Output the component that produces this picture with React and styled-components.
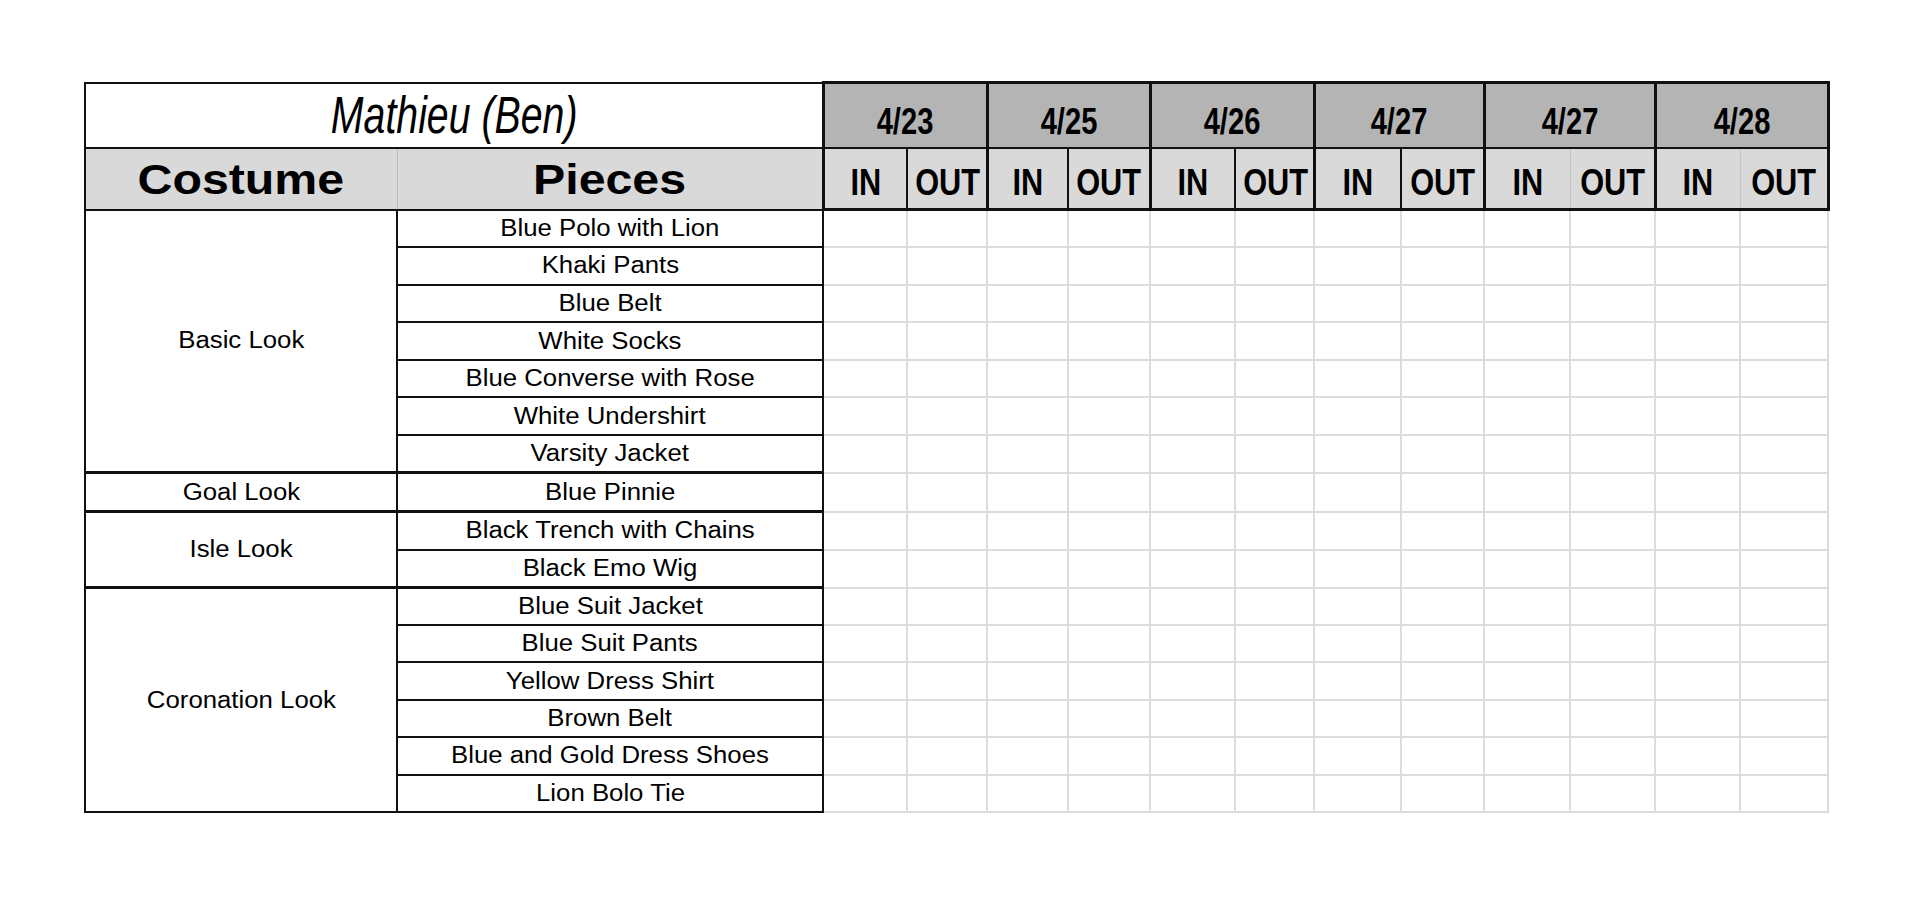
import React from "react";
import styled, { createGlobalStyle, css } from "styled-components";

const GlobalStyle = createGlobalStyle`
  html, body {
    margin: 0;
    padding: 0;
    background: #ffffff;
  }
  body {
    font-family: "Liberation Sans", Arial, sans-serif;
    color: #000;
  }
`;

const Page = styled.div`
  padding: 81px 0 0 84px;
`;

const Sheet = styled.table`
  border-collapse: collapse;
  table-layout: fixed;
  width: 1743px;
`;

const Col = styled.col`
  width: ${(p) => p.$w}px;
`;

const Row = styled.tr`
  height: ${(p) => p.$h}px;
`;

const Label = styled.span`
  display: inline-block;
  white-space: nowrap;
  transform: scaleX(${(p) => p.$sx ?? 1});
`;

const cellBase = css`
  padding: 0;
  text-align: center;
  line-height: 1;
  box-sizing: border-box;
`;

const TitleCell = styled.td`
  ${cellBase}
  border: 2px solid #111;
  border-right: 3px solid #111;
  vertical-align: bottom;
  padding-bottom: 6px;
  font-size: 51px;
  font-style: italic;
  font-weight: 400;
`;

const HeadCell = styled.td`
  ${cellBase}
  background: #d9d9d9;
  border-top: 2px solid #111;
  border-bottom: 2px solid #111;
  border-left: ${(p) => (p.$first ? "2px solid #111" : "1px solid #bdbdbd")};
  border-right: ${(p) => (p.$first ? "1px solid #bdbdbd" : "3px solid #111")};
  vertical-align: bottom;
  padding-bottom: 8px;
  font-size: 42px;
  font-weight: 700;
`;

const DateCell = styled.td`
  ${cellBase}
  background: #b4b4b4;
  border: 3px solid #111;
  border-bottom: 2px solid #111;
  vertical-align: bottom;
  padding-bottom: 7px;
  font-size: 36px;
  font-weight: 700;
`;

const SlotCell = styled.td`
  ${cellBase}
  background: #d9d9d9;
  border-top: 2px solid #111;
  border-bottom: 3px solid #111;
  ${(p) =>
    p.$side === "in"
      ? css`
          border-left: 3px solid #111;
          border-right: ${p.$dark ? "2px solid #111" : "1px solid #c4c4c4"};
        `
      : css`
          border-right: 3px solid #111;
          border-left: ${p.$dark ? "2px solid #111" : "1px solid #c4c4c4"};
        `}
  vertical-align: bottom;
  padding-bottom: 7px;
  font-size: 37.5px;
  font-weight: 700;
`;

const LookCell = styled.td`
  ${cellBase}
  border-left: 2px solid #111;
  border-right: 2px solid #111;
  border-bottom: ${(p) => (p.$last ? "2px" : "3px")} solid #111;
  vertical-align: middle;
  font-size: 23px;
`;

const PieceCell = styled.td`
  ${cellBase}
  border-right: 2px solid #111;
  border-bottom: ${(p) => (p.$sep ? "3px" : "2px")} solid #111;
  vertical-align: middle;
  font-size: 23px;
`;

const CheckCell = styled.td`
  ${cellBase}
  border: 2px solid #dcdcdc;
`;

const dates = [
  { label: "4/23", dark: true },
  { label: "4/25", dark: true },
  { label: "4/26", dark: true },
  { label: "4/27", dark: true },
  { label: "4/27", dark: false },
  { label: "4/28", dark: false },
];

const slotWidths = [84, 80, 81, 82, 85, 79, 87, 83, 86, 85, 85, 88];

const looks = [
  {
    name: "Basic Look",
    h: 37.6,
    pieces: [
      "Blue Polo with Lion",
      "Khaki Pants",
      "Blue Belt",
      "White Socks",
      "Blue Converse with Rose",
      "White Undershirt",
      "Varsity Jacket",
    ],
  },
  { name: "Goal Look", h: 39, pieces: ["Blue Pinnie"] },
  {
    name: "Isle Look",
    h: 38,
    pieces: ["Black Trench with Chains", "Black Emo Wig"],
  },
  {
    name: "Coronation Look",
    h: 37.4,
    pieces: [
      "Blue Suit Jacket",
      "Blue Suit Pants",
      "Yellow Dress Shirt",
      "Brown Belt",
      "Blue and Gold Dress Shoes",
      "Lion Bolo Tie",
    ],
  },
];

const BODY_SX = 1.12;

export default function App() {
  return (
    <Page>
      <GlobalStyle />
      <Sheet>
        <colgroup>
          <Col $w={312} />
          <Col $w={426} />
          {slotWidths.map((w, i) => (
            <Col key={i} $w={w} />
          ))}
        </colgroup>
        <thead>
          <Row $h={65}>
            <TitleCell colSpan={2}>
              <Label $sx={0.77}>Mathieu (Ben)</Label>
            </TitleCell>
            {dates.map((d, i) => (
              <DateCell key={i} colSpan={2}>
                <Label $sx={0.81}>{d.label}</Label>
              </DateCell>
            ))}
          </Row>
          <Row $h={62}>
            <HeadCell $first>
              <Label $sx={1.15}>Costume</Label>
            </HeadCell>
            <HeadCell>
              <Label $sx={1.15}>Pieces</Label>
            </HeadCell>
            {dates.map((d, i) => (
              <React.Fragment key={i}>
                <SlotCell $side="in" $dark={d.dark}>
                  <Label $sx={0.82}>IN</Label>
                </SlotCell>
                <SlotCell $side="out" $dark={d.dark}>
                  <Label $sx={0.82}>OUT</Label>
                </SlotCell>
              </React.Fragment>
            ))}
          </Row>
        </thead>
        <tbody>
          {looks.map((look, li) =>
            look.pieces.map((piece, pi) => {
              const lastLook = li === looks.length - 1;
              const endOfLook = pi === look.pieces.length - 1;
              return (
                <Row key={`${li}-${pi}`} $h={look.h}>
                  {pi === 0 && (
                    <LookCell rowSpan={look.pieces.length} $last={lastLook}>
                      <Label $sx={BODY_SX}>{look.name}</Label>
                    </LookCell>
                  )}
                  <PieceCell $sep={endOfLook && !lastLook}>
                    <Label $sx={BODY_SX}>{piece}</Label>
                  </PieceCell>
                  {slotWidths.map((_, k) => (
                    <CheckCell key={k} />
                  ))}
                </Row>
              );
            })
          )}
        </tbody>
      </Sheet>
    </Page>
  );
}
